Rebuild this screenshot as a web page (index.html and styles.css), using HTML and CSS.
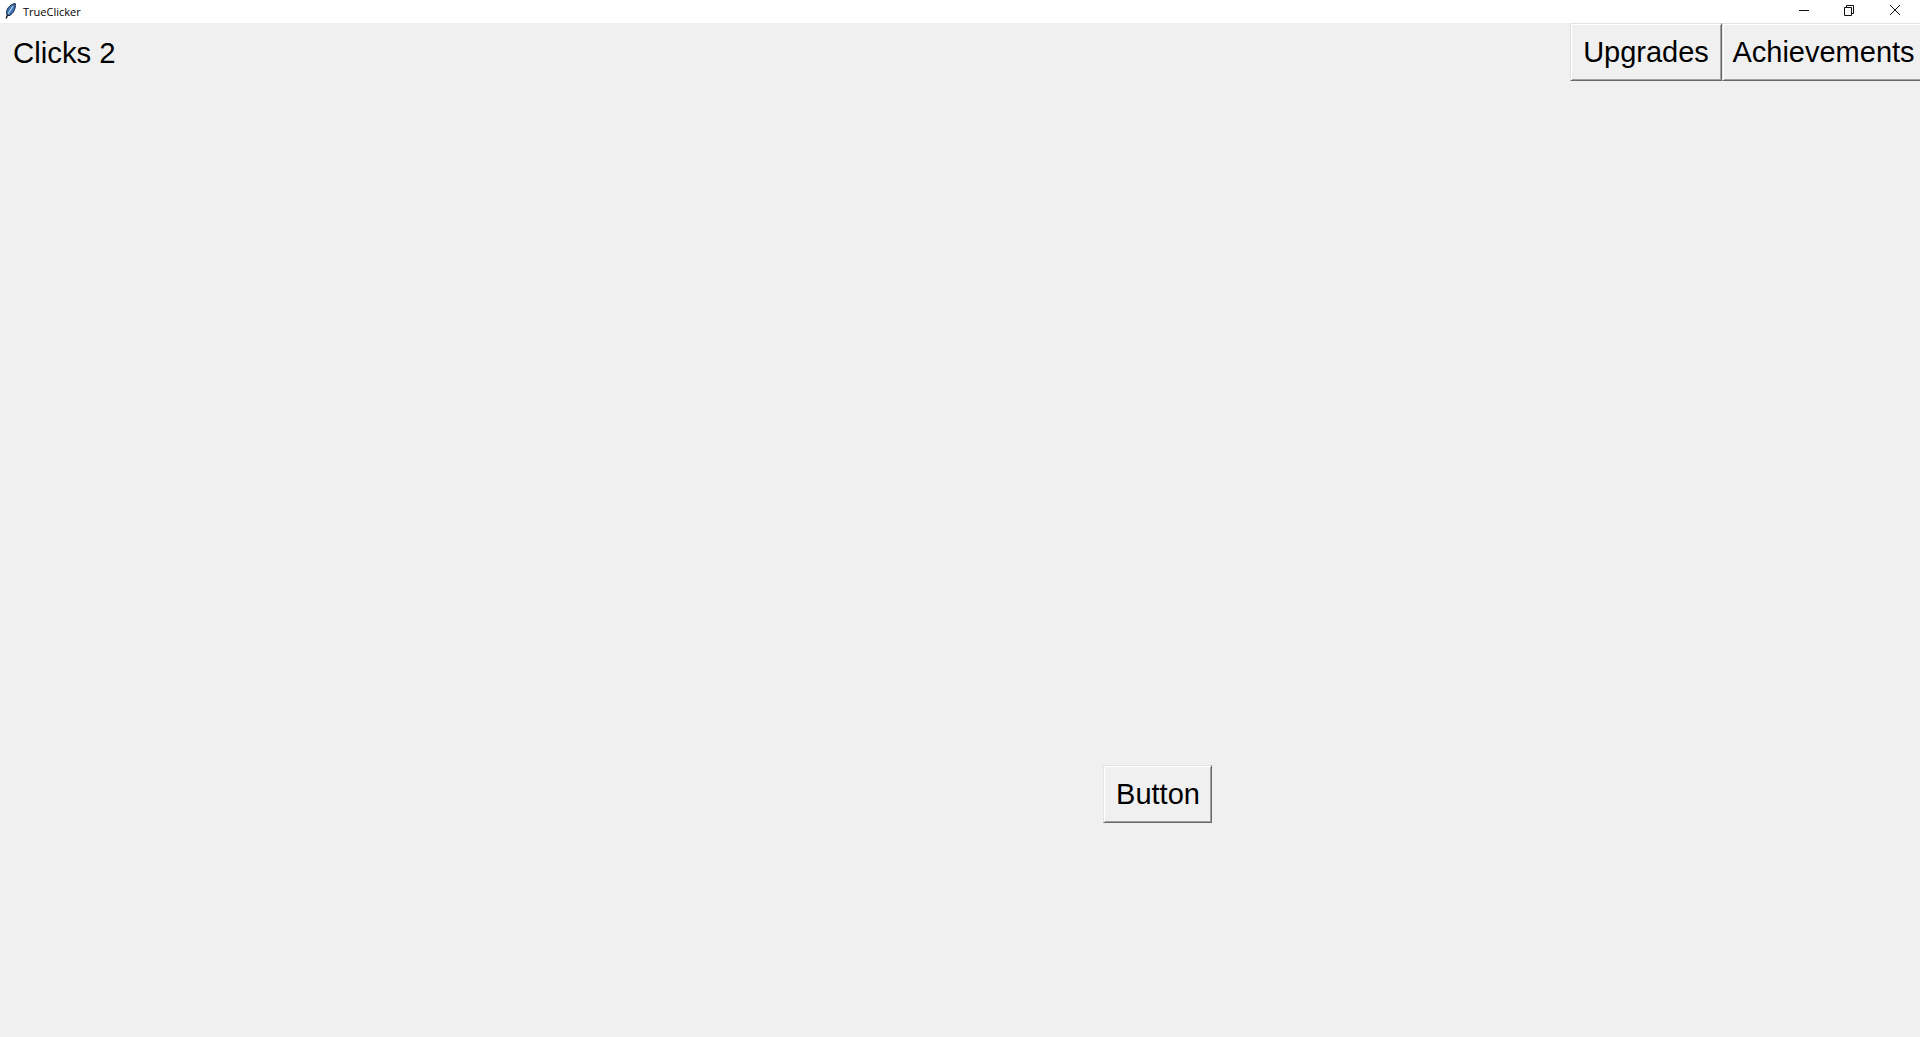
FILE: index.html
```html
<!DOCTYPE html>
<html lang="en">
<head>
<meta charset="utf-8">
<title>TrueClicker</title>
<link rel="stylesheet" href="styles.css">
</head>
<body>
<div class="window">
  <header class="titlebar">
    <div class="title-left">
      <svg class="app-icon" width="16" height="18" viewBox="0 0 16 18">
        <path d="M3.2 15.5 L4.8 11" stroke="#1a1a2a" stroke-width="1.4" fill="none"/>
        <path d="M3.8 11.5 C2.5 6.5 6.5 1.5 12.2 0.4 C13 5 10.8 10.5 6 12.8 Z" fill="#3f74b5" stroke="#16233c" stroke-width="1"/>
        <path d="M5.2 10.5 L10 3.2" stroke="#c4dbf2" stroke-width="1.1" fill="none"/>
      </svg>
      <span class="title-text">TrueClicker</span>
    </div>
    <div class="window-controls">
      <svg class="control" width="46" height="20" viewBox="0 0 46 20"><path d="M19 10.5H29" stroke="#111" fill="none"/></svg>
      <svg class="control" width="46" height="20" viewBox="0 0 46 20"><path d="M18.5 7.5H25.5V15.5H18.5ZM20.5 7.5V5.5H27.5V13.5H25.5" stroke="#111" fill="none"/></svg>
      <svg class="control" width="46" height="20" viewBox="0 0 46 20"><path d="M18 5L28 15M28 5L18 15" stroke="#111" fill="none"/></svg>
    </div>
  </header>
  <main class="stage">
    <div class="top-row">
      <div class="clicks">Clicks 2</div>
      <nav class="tabs">
        <button class="btn btn-upgrades">Upgrades</button>
        <button class="btn btn-achievements">Achievements</button>
      </nav>
    </div>
    <div class="click-area">
      <button class="btn btn-main">Button</button>
    </div>
  </main>
</div>
</body>
</html>
```
FILE: styles.css
```css
* { box-sizing: border-box; }
html, body { margin: 0; height: 100%; overflow: hidden; }
body { font-family: "Liberation Sans", Arial, sans-serif; color: #000; background: #f0f0f0; }
.window { display: flex; flex-direction: column; height: 1037px; }
.titlebar { height: 23px; background: #fff; display: flex; justify-content: space-between; flex: none; }
.title-left { display: flex; align-items: center; padding-left: 3px; }
.app-icon { display: block; }
.title-text { font-family: "Open Sans", sans-serif; font-size: 11px; margin-left: 4px; color: #000; }
.window-controls { display: flex; align-items: flex-start; padding-right: 2px; }
.control { display: block; }
.stage { flex: 1; background: #f0f0f0; display: flex; flex-direction: column; }
.top-row { display: flex; justify-content: space-between; align-items: flex-start; height: 58px; flex: none; }
.clicks { font-size: 29.33px; line-height: 34px; padding: 13px 0 0 13px; }
.tabs { display: flex; }
.btn {
  font-family: "Liberation Sans", Arial, sans-serif;
  font-size: 29px;
  color: #000;
  background: #f0f0f0;
  margin: 0;
  padding: 1px 0 0;
  height: 58px;
  border-style: solid;
  border-width: 1px;
  border-color: #e3e3e3 #696969 #696969 #e3e3e3;
  border-radius: 0;
  box-shadow: inset 1px 1px #fff, inset -1px -1px #a0a0a0;
}
.btn-upgrades { width: 152px; }
.btn-achievements { width: 198px; border-right-width: 0; padding-left: 4px; box-shadow: inset 1px 1px #fff, inset 0 -1px #a0a0a0; }
.click-area { padding: 684px 0 0 1103px; }
.btn-main { width: 109px; display: block; padding-left: 1px; }
```
